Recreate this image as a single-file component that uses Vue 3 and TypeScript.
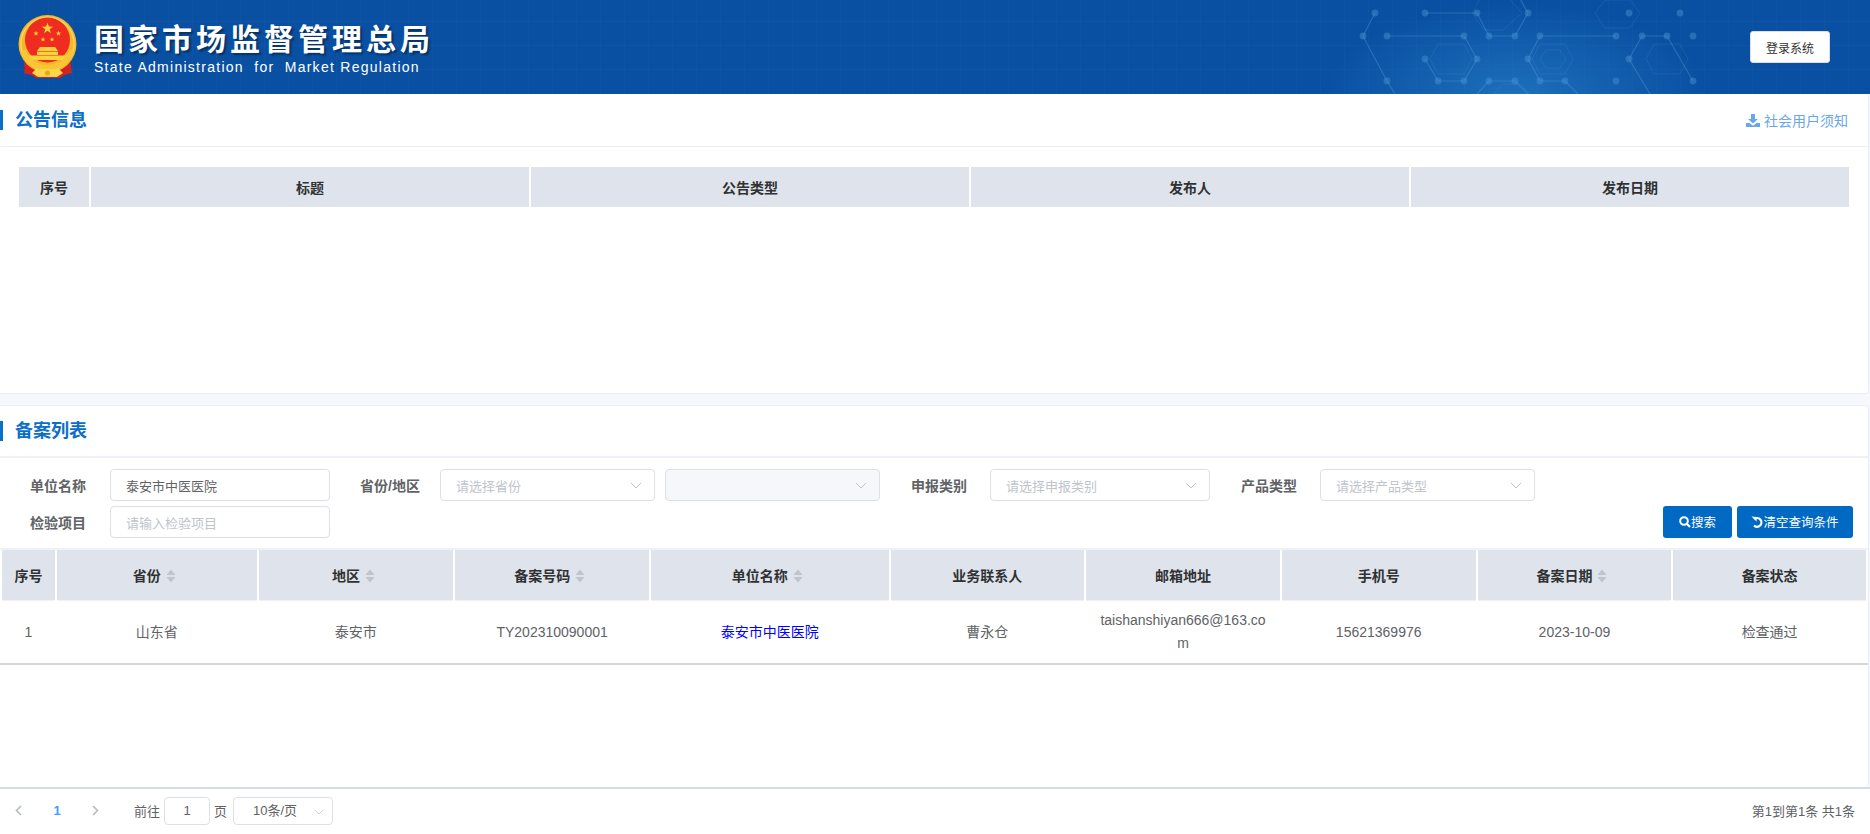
<script setup lang="ts">
interface Column {
  label: string
  width: number
  sortable?: boolean
}

const noticeColumns: Column[] = [
  { label: '序号', width: 70 },
  { label: '标题', width: 438 },
  { label: '公告类型', width: 438 },
  { label: '发布人', width: 438 },
  { label: '发布日期', width: 438 },
]

const recordColumns: Column[] = [
  { label: '序号', width: 53 },
  { label: '省份', width: 200, sortable: true },
  { label: '地区', width: 195, sortable: true },
  { label: '备案号码', width: 194, sortable: true },
  { label: '单位名称', width: 238, sortable: true },
  { label: '业务联系人', width: 194 },
  { label: '邮箱地址', width: 194 },
  { label: '手机号', width: 194 },
  { label: '备案日期', width: 194, sortable: true },
  { label: '备案状态', width: 193 },
]

const record = {
  index: 1,
  province: '山东省',
  city: '泰安市',
  code: 'TY202310090001',
  company: '泰安市中医医院',
  contact: '曹永仓',
  email: 'taishanshiyan666@163.com',
  phone: '15621369976',
  date: '2023-10-09',
  status: '检查通过',
}

const hexNodes: [number, number][] = [
  [1375, 13], [1425, 13], [1477, 13], [1528, 13], [1629, 13], [1680, 13],
  [1363, 36], [1387, 36], [1464, 36], [1489, 36], [1515, 36], [1540, 36],
  [1616, 36], [1642, 36], [1667, 36], [1693, 36],
  [1425, 59], [1477, 59], [1528, 59], [1629, 59],
  [1387, 81], [1438, 81], [1464, 81], [1489, 81], [1515, 81], [1540, 81],
  [1565, 81], [1616, 81], [1693, 81],
]

const hexLines = [
  'M1425 13H1477L1489 36H1515L1528 13L1515 -10',
  'M1387 36H1464L1477 59L1464 81H1438L1425 59',
  'M1540 36H1616',
  'M1540 36L1528 59L1540 81H1565L1578 94',
  'M1477 94L1489 81H1515L1528 94',
  'M1642 36L1629 59L1650 94',
  'M1642 36H1667L1693 81',
  'M1375 13L1363 36L1387 81L1395 94',
]

const hexRings = [
  'M1503 -8L1522 13L1503 30H1484L1472 13L1484 -8Z',
  'M1438 44H1464L1472 59L1464 74H1438L1430 59Z',
  'M1540 44H1565L1573 59L1565 74H1540L1532 59Z',
  'M1546 50H1560L1566 59L1560 68H1546L1540 59Z',
  'M1654 44H1680L1688 59L1680 74H1654L1646 59Z',
  'M1605 0H1630L1640 13L1630 28H1605L1595 13Z',
  'M1503 84H1520L1530 94H1493Z',
]

// five pointed star for the emblem
function star(cx: number, cy: number, r: number): string {
  const pts: string[] = []
  for (let i = 0; i < 10; i++) {
    const len = i % 2 === 0 ? r : r * 0.4
    const a = (Math.PI / 5) * i - Math.PI / 2
    pts.push(`${(cx + len * Math.cos(a)).toFixed(2)},${(cy + len * Math.sin(a)).toFixed(2)}`)
  }
  return pts.join(' ')
}

const emblemStars = [star(29.5, 13.5, 5.8), star(18, 18.5, 2.8), star(40.5, 18.5, 2.8), star(25, 24.5, 2.6), star(34, 24.5, 2.6)]
</script>

<template>
  <div class="page">
    <header class="top-bar">
      <svg class="hex-bg" width="1870" height="94" viewBox="0 0 1870 94" aria-hidden="true">
        <g fill="none" stroke="#5ea3dc" stroke-width="1.2" opacity="0.34">
          <path v-for="line in hexLines" :key="line" :d="line" />
        </g>
        <g fill="none" stroke="#5ea3dc" stroke-width="1" opacity="0.16">
          <path v-for="ring in hexRings" :key="ring" :d="ring" />
        </g>
        <g fill="#4f97d6" opacity="0.42">
          <circle v-for="node in hexNodes" :key="node.join()" :cx="node[0]" :cy="node[1]" r="3.4" />
        </g>
      </svg>

      <svg class="emblem" width="60" height="63" viewBox="0 0 60 63" aria-hidden="true">
        <path d="M9 42L6 58L14 60L18 63H42L46 60L54 58L51 42Z" fill="#d8211c" />
        <circle cx="29.5" cy="29" r="29" fill="#f4b62a" />
        <circle cx="29.5" cy="29" r="26.6" fill="none" stroke="#ffd655" stroke-width="1.6" />
        <circle cx="29.5" cy="25" r="22.5" fill="#ee2c20" />
        <polygon v-for="pts in emblemStars" :key="pts" :points="pts" fill="#fcd23c" />
        <g fill="#fcd23c">
          <path d="M22 32H37L40 36H19Z" />
          <path d="M19 36.6H40V40H19Z" />
          <path d="M10 40.5H49V45H10Z" />
        </g>
        <path d="M7 34C11 46 21 50 29.5 50C38 50 48 46 52 34L56 38C51 50 40 55 29.5 55C19 55 8 50 3 38Z" fill="#f8c537" />
        <path d="M6 46C9 51 12 53 16 55L14 60L7 58Z" fill="#d8211c" />
        <path d="M53 46C50 51 47 53 43 55L45 60L52 58Z" fill="#d8211c" />
        <path d="M18 54H41L45 58L39 62H20L14 58Z" fill="#ffd64a" />
        <circle cx="29.5" cy="58" r="2.6" fill="#e9a81c" />
      </svg>

      <div class="org-name">
        <div class="org-cn">国家市场监督管理总局</div>
        <div class="org-en">State Administration&nbsp; for&nbsp; Market Regulation</div>
      </div>

      <button class="login-btn" type="button">登录系统</button>
    </header>

    <section class="card notice-card">
      <div class="card-head">
        <h2 class="card-title">公告信息</h2>
        <a class="notice-link">
          <svg width="14" height="13" viewBox="0 0 14 13" aria-hidden="true">
            <path d="M5 0H9V5H12L7 9.6L2 5H5Z" fill="currentColor" />
            <path d="M0 9H3.4L7 11.8L10.6 9H14V13H0Z" fill="currentColor" />
          </svg>
          社会用户须知
        </a>
      </div>
      <div class="notice-body">
        <table class="grid">
          <colgroup>
            <col v-for="col in noticeColumns" :key="col.label" :style="{ width: col.width + 'px' }" />
          </colgroup>
          <thead>
            <tr>
              <th v-for="col in noticeColumns" :key="col.label" class="notice-th">{{ col.label }}</th>
            </tr>
          </thead>
        </table>
      </div>
    </section>

    <section class="card record-card">
      <div class="card-head record-head">
        <h2 class="card-title">备案列表</h2>
      </div>

      <form class="filters" @submit.prevent>
        <div class="filter-row">
          <div class="field field-first">
            <label class="field-label">单位名称</label>
            <div class="control">泰安市中医医院</div>
          </div>
          <div class="field field-region">
            <label class="field-label">省份/地区</label>
            <div class="control select is-empty">
              请选择省份
              <svg class="chevron" width="12" height="7" viewBox="0 0 12 7"><path d="M1 1L6 6L11 1" /></svg>
            </div>
            <div class="control select is-disabled">
              <svg class="chevron" width="12" height="7" viewBox="0 0 12 7"><path d="M1 1L6 6L11 1" /></svg>
            </div>
          </div>
          <div class="field field-type">
            <label class="field-label">申报类别</label>
            <div class="control select wide is-empty">
              请选择申报类别
              <svg class="chevron" width="12" height="7" viewBox="0 0 12 7"><path d="M1 1L6 6L11 1" /></svg>
            </div>
          </div>
          <div class="field field-type">
            <label class="field-label">产品类型</label>
            <div class="control select is-empty">
              请选择产品类型
              <svg class="chevron" width="12" height="7" viewBox="0 0 12 7"><path d="M1 1L6 6L11 1" /></svg>
            </div>
          </div>
        </div>

        <div class="filter-row">
          <div class="field field-first">
            <label class="field-label">检验项目</label>
            <div class="control is-empty">请输入检验项目</div>
          </div>
          <div class="actions">
            <button class="action-btn search-btn" type="button">
              <svg width="12" height="12" viewBox="0 0 12 12" aria-hidden="true">
                <circle cx="5" cy="5" r="3.8" fill="none" stroke="#fff" stroke-width="2" />
                <path d="M7.8 7.8L11 11" stroke="#fff" stroke-width="2.2" />
              </svg>搜索
            </button>
            <button class="action-btn reset-btn" type="button">
              <svg width="12" height="12" viewBox="0 0 12 12" aria-hidden="true">
                <path d="M3.2 3A4.4 4.4 0 1 1 3 9.6" fill="none" stroke="#fff" stroke-width="2.2" />
                <path d="M0.4 0.4L5.6 1V5.6Z" fill="#fff" />
              </svg>清空查询条件
            </button>
          </div>
        </div>
      </form>

      <div class="record-table">
        <table class="grid">
          <colgroup>
            <col v-for="col in recordColumns" :key="col.label" :style="{ width: col.width + 'px' }" />
          </colgroup>
          <thead>
            <tr>
              <th v-for="col in recordColumns" :key="col.label" class="record-th">
                {{ col.label }}
                <svg v-if="col.sortable" class="sort" width="10" height="14" viewBox="0 0 10 14" aria-hidden="true">
                  <path d="M5 0.5L9.5 6H0.5Z" />
                  <path d="M5 13.5L0.5 8H9.5Z" />
                </svg>
              </th>
            </tr>
          </thead>
          <tbody>
            <tr>
              <td>{{ record.index }}</td>
              <td>{{ record.province }}</td>
              <td>{{ record.city }}</td>
              <td>{{ record.code }}</td>
              <td><a class="company-link">{{ record.company }}</a></td>
              <td>{{ record.contact }}</td>
              <td class="email">{{ record.email }}</td>
              <td>{{ record.phone }}</td>
              <td>{{ record.date }}</td>
              <td>{{ record.status }}</td>
            </tr>
          </tbody>
        </table>
      </div>
    </section>

    <footer class="pager">
      <div class="pager-left">
        <svg class="pager-arrow" width="7" height="11" viewBox="0 0 7 11"><path d="M6 1L1.5 5.5L6 10" /></svg>
        <span class="pager-current">1</span>
        <svg class="pager-arrow" width="7" height="11" viewBox="0 0 7 11"><path d="M1 1L5.5 5.5L1 10" /></svg>
        <span class="pager-goto">前往</span>
        <span class="pager-input">1</span>
        <span>页</span>
        <span class="pager-size">
          10条/页
          <svg class="chevron" width="10" height="6" viewBox="0 0 12 7"><path d="M1 1L6 6L11 1" /></svg>
        </span>
      </div>
      <div class="pager-total">第1到第1条 共1条</div>
    </footer>
  </div>
</template>

<style>
html,
body {
  margin: 0;
  overflow: hidden;
}
</style>

<style scoped>
.page {
  display: flex;
  flex-direction: column;
  width: 1870px;
  height: 834px;
  overflow: hidden;
  background: #f7f8fd;
  color: #606266;
  font-family: 'Liberation Sans', 'Noto Sans CJK SC', sans-serif;
  font-size: 13px;
}

.top-bar {
  position: relative;
  display: flex;
  flex: none;
  align-items: center;
  height: 94px;
  padding: 0 40px 0 18px;
  box-sizing: border-box;
  overflow: hidden;
  background:
    radial-gradient(ellipse 190px 90px at 1515px 94px, rgba(44, 136, 208, 0.55), transparent),
    repeating-linear-gradient(90deg, rgba(255, 255, 255, 0.02) 0 1px, transparent 1px 24px),
    repeating-linear-gradient(0deg, rgba(255, 255, 255, 0.02) 0 1px, transparent 1px 24px),
    #0a50a2;
}

.hex-bg {
  position: absolute;
  top: 0;
  left: 0;
}

.emblem {
  position: relative;
  flex: none;
  margin-top: -1px;
}

.org-name {
  position: relative;
  margin-left: 16px;
  color: #fff;
}

.org-cn {
  margin-top: 3px;
  font-size: 30px;
  font-weight: 700;
  line-height: 36px;
  letter-spacing: 4px;
  text-shadow: 2px 2px 2px rgba(0, 0, 0, 0.4);
}

.org-en {
  margin-top: 1px;
  font-size: 14px;
  line-height: 17px;
  letter-spacing: 1.27px;
}

.login-btn {
  position: relative;
  width: 80px;
  height: 32px;
  margin-left: auto;
  border: 1px solid #dcdfe6;
  border-radius: 3px;
  background: #fff;
  color: #333;
  font: inherit;
  font-size: 12px;
}

.card {
  box-sizing: border-box;
  width: 1869px;
  border-right: 1px solid #e9ecf5;
  border-bottom: 1px solid #e9ecf5;
  border-radius: 0 4px 4px 0;
  background: #fff;
}

.notice-card {
  flex: none;
  height: 300px;
}

.record-card {
  flex: 1;
  margin-top: 11px;
  border-top: 1px solid #eceff7;
  border-bottom: 0;
}

.card-head {
  display: flex;
  align-items: center;
  justify-content: space-between;
  box-sizing: border-box;
  height: 53px;
  padding: 0 20px 0 0;
  border-bottom: 1px solid #eef0f7;
}

.record-head {
  height: 52px;
  border-bottom: 2px solid #eef1f7;
}

.card-title {
  margin: 0;
  padding-left: 12px;
  border-left: 3px solid #0b6ec9;
  color: #0b6ec9;
  font-size: 18px;
  font-weight: 700;
  line-height: 20px;
}

.notice-link {
  display: flex;
  align-items: center;
  gap: 4px;
  color: #6aa6ec;
  font-size: 14px;
}

.notice-body {
  padding: 20px 0 0 17px;
}

.grid {
  border-collapse: separate;
  border-spacing: 2px 0;
  table-layout: fixed;
}

.grid th {
  padding: 0;
  background: #dfe4ec;
  color: #303133;
  font-size: 14px;
  font-weight: 700;
}

.notice-th {
  height: 40px;
}

.filters {
  display: flex;
  flex-direction: column;
  gap: 5px;
  padding: 11px 15px 10px 0;
}

.filter-row {
  display: flex;
  align-items: center;
  height: 32px;
}

.field {
  display: flex;
  align-items: center;
  gap: 10px;
  margin-left: 31px;
}

.field-first {
  margin-left: 30px;
}

.field-region {
  margin-left: 30px;
}

.field-label {
  width: 70px;
  color: #606266;
  font-size: 14px;
  font-weight: 700;
  white-space: nowrap;
}

.field-type .field-label {
  width: 69px;
}

.control {
  position: relative;
  box-sizing: border-box;
  display: flex;
  align-items: center;
  width: 220px;
  height: 32px;
  padding-left: 15px;
  border: 1px solid #dcdfe6;
  border-radius: 4px;
  background: #fff;
  color: #606266;
  font-size: 13px;
}

.select {
  width: 215px;
}

.select.wide {
  width: 220px;
}

.is-empty {
  color: #c0c4cc;
}

.is-disabled {
  background: #f5f7fa;
}

.chevron {
  fill: none;
  stroke: #c0c4cc;
  stroke-width: 1;
}

.control .chevron {
  position: absolute;
  top: 12px;
  right: 12px;
}

.actions {
  display: flex;
  gap: 5px;
  margin-left: auto;
  margin-top: -1px;
}

.action-btn {
  display: flex;
  align-items: center;
  justify-content: center;
  gap: 0;
  height: 32px;
  padding: 0;
  border: 0;
  border-radius: 3px;
  background: #0069c4;
  color: #fff;
  font: inherit;
  font-size: 12.5px;
}

.search-btn {
  width: 69px;
}

.reset-btn {
  width: 116px;
}

.record-table {
  border-top: 2px solid #eef1f7;
}

.record-th {
  height: 50px;
  border-bottom: 1px solid #eef1f7;
}

.sort {
  margin: 0 5px 0 1px;
  vertical-align: -2px;
  fill: #c0c4cc;
}

.grid td {
  height: 62px;
  padding: 0 10px;
  color: #606266;
  font-size: 14px;
  line-height: 23px;
  text-align: center;
}

.record-table .grid {
  border-bottom: 2px solid #d4d6da;
}

.email {
  word-break: break-all;
}

.company-link {
  color: #0000ff;
}

.pager {
  display: flex;
  flex: none;
  align-items: center;
  justify-content: space-between;
  box-sizing: border-box;
  height: 47px;
  padding: 0 15px 2px;
  border-top: 2px solid #d5dbe8;
  background: #fff;
}

.pager-left {
  display: flex;
  align-items: center;
}

.pager-arrow {
  fill: none;
  stroke: #b4bac6;
  stroke-width: 1.6;
}

.pager-current {
  width: 70px;
  color: #409eff;
  font-weight: 700;
  text-align: center;
}

.pager-goto {
  margin: 0 4px 0 35px;
}

.pager-input {
  box-sizing: border-box;
  width: 46px;
  height: 28px;
  margin-right: 4px;
  border: 1px solid #dcdfe6;
  border-radius: 4px;
  line-height: 26px;
  text-align: center;
}

.pager-size {
  position: relative;
  box-sizing: border-box;
  width: 100px;
  height: 28px;
  margin-left: 6px;
  padding-left: 19px;
  border: 1px solid #dcdfe6;
  border-radius: 4px;
  line-height: 26px;
}

.pager-size .chevron {
  position: absolute;
  top: 11px;
  right: 8px;
}

.pager-total {
  color: #606266;
}
</style>
